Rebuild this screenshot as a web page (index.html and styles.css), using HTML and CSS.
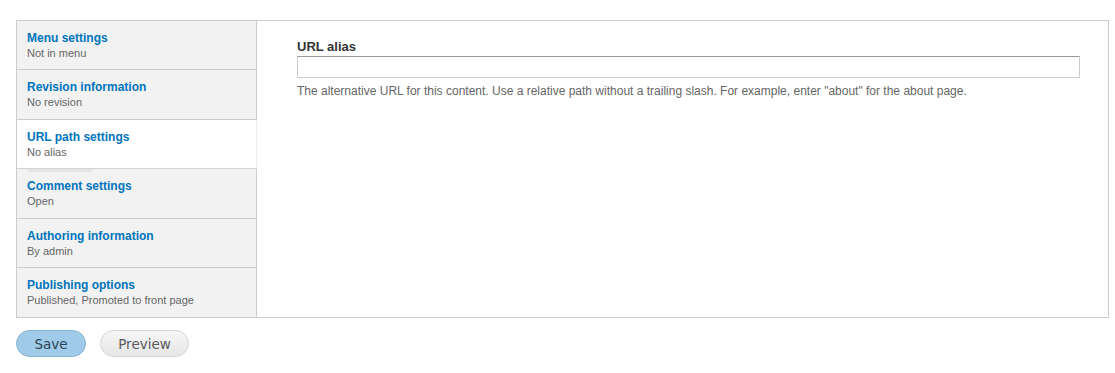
FILE: index.html
```html
<!DOCTYPE html>
<html lang="en">
<head>
  <meta charset="UTF-8" />
  <title>Edit content</title>
  <link rel="stylesheet" href="styles.css">
</head>
<body>

  <div class="vertical-tabs">
    <ul class="tabs-list">
      <li class="tab">
        <a href="#" class="tab-title">Menu settings</a>
        <span class="tab-summary">Not in menu</span>
      </li>
      <li class="tab">
        <a href="#" class="tab-title">Revision information</a>
        <span class="tab-summary">No revision</span>
      </li>
      <li class="tab selected">
        <a href="#" class="tab-title">URL path settings</a>
        <span class="tab-summary">No alias</span>
        <span class="tab-marker"></span>
      </li>
      <li class="tab">
        <a href="#" class="tab-title">Comment settings</a>
        <span class="tab-summary">Open</span>
      </li>
      <li class="tab">
        <a href="#" class="tab-title">Authoring information</a>
        <span class="tab-summary">By admin</span>
      </li>
      <li class="tab last">
        <a href="#" class="tab-title">Publishing options</a>
        <span class="tab-summary">Published, Promoted to front page</span>
      </li>
    </ul>

    <div class="tab-pane">
      <label class="field-label" for="edit-path">URL alias</label>
      <input type="text" id="edit-path" class="form-text">
      <div class="description">The alternative URL for this content. Use a relative path without a trailing slash. For example, enter "about" for the about page.</div>
    </div>
  </div>

  <div class="form-actions">
    <button class="button primary">Save</button>
    <button class="button">Preview</button>
  </div>

</body>
</html>
```

FILE: styles.css
```css
body {
  font-family: "Liberation Sans", Arial, sans-serif;
  background-color: #fff;
  margin: 0;
  padding: 20px 6px 0 16px;
  color: #333;
}

.vertical-tabs {
  display: flex;
  border: 1px solid #ccc;
  background-color: #fff;
}

.tabs-list {
  list-style: none;
  margin: 0;
  padding: 0;
  width: 239px;
  flex-shrink: 0;
  background-color: #f2f2f2;
  border-right: 1px solid #ccc;
}

.tab {
  position: relative;
  display: flex;
  flex-direction: column;
  height: 49.4px;
  padding: 10px 10px 0 10px;
  box-sizing: border-box;
  border-bottom: 1px solid #ccc;
}

.tab.last {
  border-bottom: none;
}

.tab.selected {
  background-color: #fff;
  margin-right: -1px;
  border-right: 1px solid #eee;
  border-bottom-color: #d4d4d4;
}

.tab-marker {
  position: absolute;
  left: 10px;
  bottom: -4px;
  width: 66px;
  height: 3px;
  background-color: #e4e4e4;
  border-radius: 0 0 3px 3px;
}

.tab-title {
  font-size: 12px;
  font-weight: bold;
  line-height: 15px;
  color: #0074bd;
  text-decoration: none;
}

.tab-summary {
  font-size: 11px;
  line-height: 15px;
  color: #666;
}

.tab-pane {
  flex: 1;
  padding: 18px 28px 20px 40px;
}

.field-label {
  display: block;
  font-size: 13px;
  font-weight: bold;
  line-height: 16px;
  color: #333;
  margin-bottom: 1px;
}

.form-text {
  display: block;
  width: 100%;
  height: 22px;
  box-sizing: border-box;
  border: 1px solid #ccc;
  border-top-color: #999;
  margin: 0;
  padding: 2px 4px;
}

.description {
  font-size: 12px;
  line-height: 14px;
  color: #666;
  margin-top: 6px;
}

.form-actions {
  display: flex;
  gap: 14px;
  margin-top: 12px;
}

.button {
  font-family: "DejaVu Sans", Verdana, sans-serif;
  font-size: 13.5px;
  width: 89px;
  height: 27px;
  padding: 0;
  border-radius: 14px;
  border: 1px solid #d4d4d4;
  background: linear-gradient(#f6f6f6, #e6e6e6);
  color: #5a5a5a;
  cursor: pointer;
}

.button.primary {
  width: 70px;
  background: #9fcbe8;
  border-color: #88b4d4;
  color: #2e4257;
}
```
